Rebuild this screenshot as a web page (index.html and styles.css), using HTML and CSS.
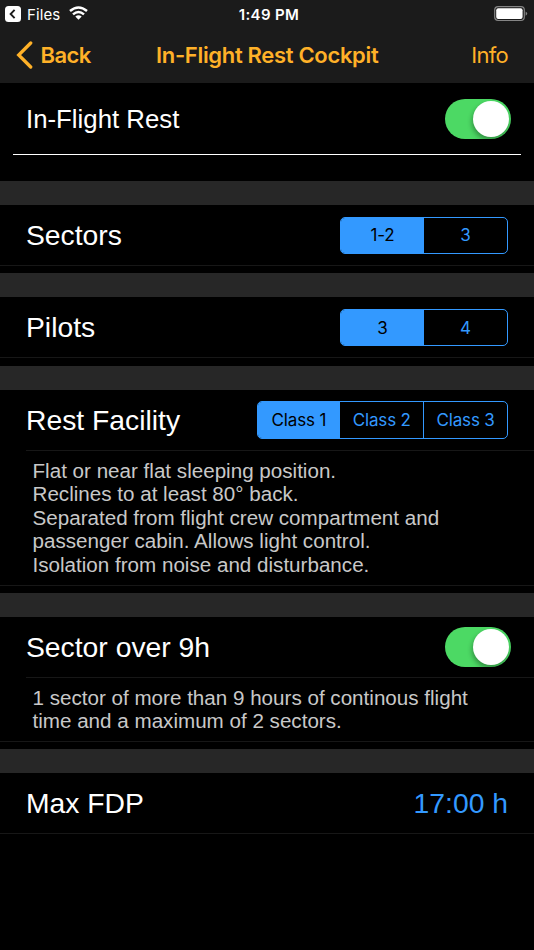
FILE: index.html
```html
<!DOCTYPE html>
<html lang="en">
<head>
<meta charset="utf-8">
<title>In-Flight Rest Cockpit</title>
<link rel="stylesheet" href="styles.css">
</head>
<body>
<header>
  <div class="status">
    <div class="status-left">
      <svg width="16" height="16" viewBox="0 0 16 16"><rect width="16" height="16" rx="3.5" fill="#fff"/><path d="M9.6 3.8 L5.6 8 L9.6 12.2" fill="none" stroke="#1b1b1b" stroke-width="1.9"/></svg>
      <span class="files">Files</span>
      <svg class="wifi" width="19" height="14" viewBox="0 0 19 14"><g fill="none" stroke="#fff" stroke-width="2.5"><path d="M1 5 Q9.5 -2 18 5"/><path d="M4 8.4 Q9.5 3.7 15 8.4"/></g><path d="M6.3 10.5 Q9.5 7.9 12.7 10.5 L9.5 13.7Z" fill="#fff"/></svg>
    </div>
    <span class="time">1:49 PM</span>
    <svg class="battery" width="34" height="16" viewBox="0 0 34 16"><rect x=".7" y=".7" width="29.6" height="13.8" rx="3.4" fill="none" stroke="#858585" stroke-width="1.2"/><rect x="2.2" y="2.2" width="26.4" height="10.8" rx="2" fill="#fff"/><path d="M31.6 5.4 Q33.2 6.2 33.2 7.6 Q33.2 9 31.6 9.8Z" fill="#858585"/></svg>
  </div>
  <nav>
    <a class="back"><svg width="17" height="28" viewBox="0 0 17 28"><path d="M14.7 2 L2.7 14 L14.7 26" fill="none" stroke="#ffb128" stroke-width="3.3" stroke-linecap="round" stroke-linejoin="miter"/></svg><span>Back</span></a>
    <h1>In-Flight Rest Cockpit</h1>
    <a class="info">Info</a>
  </nav>
</header>
<main>
  <section class="intro">
    <div class="row main-row"><span class="small-label">In-Flight Rest</span><i class="switch"></i></div>
  </section>
  <section class="group">
    <div class="row"><span>Sectors</span><div class="segments"><b class="on">1-2</b><b>3</b></div></div>
  </section>
  <section class="group">
    <div class="row"><span>Pilots</span><div class="segments"><b class="on">3</b><b>4</b></div></div>
  </section>
  <section class="group">
    <div class="row inset"><span>Rest Facility</span><div class="segments three"><b class="on">Class 1</b><b>Class 2</b><b>Class 3</b></div></div>
    <p class="note facility">Flat or near flat sleeping position.<br>Reclines to at least 80° back.<br>Separated from flight crew compartment and<br>passenger cabin. Allows light control.<br>Isolation from noise and disturbance.</p>
  </section>
  <section class="group">
    <div class="row inset"><span>Sector over 9h</span><i class="switch"></i></div>
    <p class="note sector">1 sector of more than 9 hours of continous flight<br>time and a maximum of 2 sectors.</p>
  </section>
  <section class="group">
    <div class="row"><span>Max FDP</span><span class="value">17:00 h</span></div>
  </section>
</main>
</body>
</html>
```
FILE: styles.css
```css
* { box-sizing: border-box; }
body {
  margin: 0;
  width: 534px;
  height: 950px;
  overflow: hidden;
  background: #000;
  color: #fff;
  font-family: "Liberation Sans", sans-serif;
}
header {
  height: 83px;
  background: #1b1b1b;
  font-family: Inter, sans-serif;
}
.status {
  height: 28px;
  display: grid;
  grid-template-columns: 1fr auto 1fr;
  align-items: center;
  padding: 0 6px 0 5px;
}
.status-left { display: flex; align-items: center; }
.files { margin-left: 6px; font-size: 15px; letter-spacing: .1px; width: 42px; }
.wifi { margin-top: -2px; }
.time { margin-left: 5px; font-size: 15px; font-weight: 600; letter-spacing: .35px; }
.battery { justify-self: end; margin-top: -1px; }
nav {
  height: 53px;
  display: grid;
  grid-template-columns: 140px 1fr auto;
  align-items: center;
  padding: 0 26px 0 16px;
  color: #ffb128;
}
.back { display: flex; align-items: center; font-size: 22px; font-weight: 600; letter-spacing: -.6px; }
.back span { margin-left: 7.5px; }
h1 { margin: 0; font-size: 22px; font-weight: 600; letter-spacing: -.32px; }
.info { font-size: 22px; letter-spacing: -.7px; }
.row {
  height: 61px;
  display: flex;
  align-items: center;
  justify-content: space-between;
  padding: 0 26px;
  font-size: 28.3px;
  border-bottom: 1px solid #171717;
}
.intro { height: 98px; padding: 0 13px; }
.main-row { height: 72px; padding: 1px 13px 0; border-bottom: 1px solid #fff; }
.small-label { font-size: 25.8px; padding-top: 1px; }
.row .switch { margin-right: -3px; }
.group { border-top: 24px solid #272727; padding-bottom: 7.3px; }
.group .row > span { padding-top: 1px; }
.inset { margin-left: 26px; padding-left: 0; }
.switch {
  width: 66px;
  height: 40px;
  border-radius: 20px;
  background: #4cd964;
  padding: 2px;
  display: flex;
  justify-content: flex-end;
}
.switch::after {
  content: "";
  width: 36px;
  height: 36px;
  border-radius: 50%;
  background: #fff;
  box-shadow: -1px 3px 5px #0005;
}
.segments {
  display: flex;
  width: 168px;
  height: 37.4px;
  margin-top: 1px;
  border: 1.4px solid #3399ff;
  border-radius: 5px;
  overflow: hidden;
  font-family: Inter, sans-serif;
  font-size: 17px;
  letter-spacing: -.15px;
  color: #3399ff;
}
.segments b {
  flex: 1;
  display: flex;
  align-items: center;
  justify-content: center;
  font-weight: 400;
}
.segments b + b { border-left: 1px solid #3399ff; }
.segments .on { background: #3399ff; color: #000; }
.segments .on + b { border-left: 0; }
.three { width: 251.5px; }
.note {
  margin: 0;
  padding: 8px 0 0 32.5px;
  font-size: 20.62px;
  line-height: 23.6px;
  color: #c8c8c8;
  white-space: nowrap;
  border-bottom: 1px solid #171717;
}
.facility { height: 135px; }
.sector { height: 64px; }
.value { color: #3399ff; }
```
